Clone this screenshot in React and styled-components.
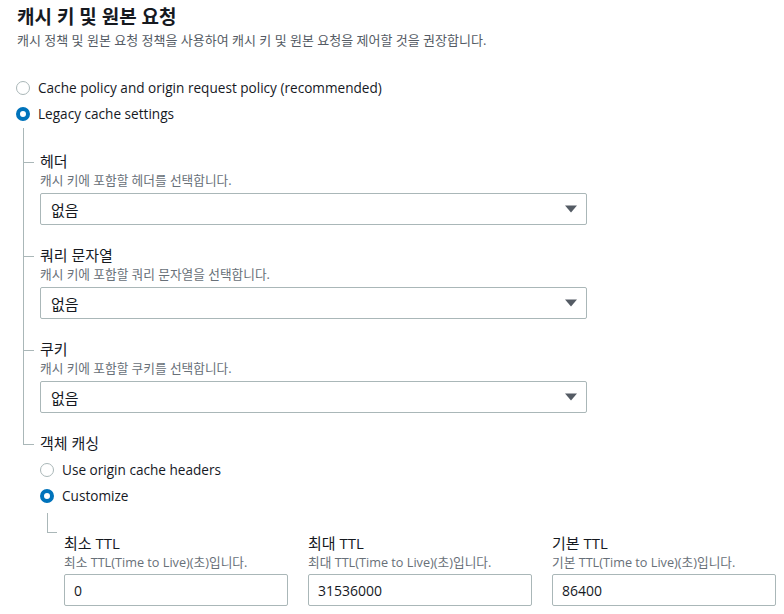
import React from "react";
import styled, { createGlobalStyle } from "styled-components";

const Global = createGlobalStyle`
  html, body { margin: 0; padding: 0; background: #ffffff; }
  body {
    font-family: "Open Sans", "Noto Sans CJK KR", sans-serif;
    color: #16191f;
  }
  * { box-sizing: border-box; }
`;

const Page = styled.div`
  width: 784px;
  height: 614px;
  overflow: hidden;
  padding: 5px 0 0 16px;
`;

const Title = styled.h2`
  margin: 0;
  font-size: 19px;
  font-weight: 700;
  line-height: 24px;
  padding-left: 1px;
`;

const Subtitle = styled.p`
  margin: 3px 0 0;
  font-size: 13px;
  line-height: 16px;
  color: #545b64;
  padding-left: 1px;
`;

const RadioList = styled.div`
  display: flex;
  flex-direction: column;
  gap: 6px;
  margin-top: ${(p) => p.$top}px;
`;

const RadioRow = styled.label`
  display: flex;
  align-items: center;
  gap: 8px;
  height: 20px;
  font-size: 13.6px;
  line-height: 20px;
  color: #16191f;
`;

const RadioDot = styled.span`
  width: 14px;
  height: 14px;
  border-radius: 50%;
  flex: none;
  background: #ffffff;
  border: ${(p) => (p.$checked ? "4px solid #0073bb" : "1px solid #aab7b8")};
`;

const Tree = styled.div`
  display: flex;
  flex-direction: column;
  gap: 20px;
  margin: 0 0 0 7px;
  padding-top: 27px;
`;

const TreeItem = styled.div`
  position: relative;
  padding-left: 17px;

  &::before {
    content: "";
    position: absolute;
    left: 0;
    top: -20px;
    width: 10px;
    height: 31px;
    border-left: 1px solid #aab7b8;
    border-bottom: 1px solid #aab7b8;
  }
  &:first-child::before {
    top: -23px;
    height: 34px;
  }
  &::after {
    content: "";
    position: absolute;
    left: 0;
    top: 10px;
    bottom: 0;
    border-left: 1px solid #aab7b8;
    display: ${(p) => (p.$last ? "none" : "block")};
  }
`;

const Label = styled.div`
  font-size: 15px;
  line-height: 20px;
  color: #16191f;
`;

const Desc = styled.div`
  margin-top: 1px;
  font-size: 12.7px;
  line-height: 16px;
  color: #687078;
`;

const Select = styled.div`
  margin-top: 5px;
  width: 547px;
  height: 32px;
  border: 1px solid #aab7b8;
  border-radius: 2px;
  display: flex;
  align-items: center;
  justify-content: space-between;
  padding: 0 9px 0 10px;
  font-size: 15px;
  color: #16191f;
`;

const Connector = styled.div`
  width: 10px;
  height: 20px;
  margin: 7px 0 0 7px;
  border-left: 1px solid #aab7b8;
  border-bottom: 1px solid #aab7b8;
`;

const Fields = styled.div`
  display: grid;
  grid-template-columns: repeat(3, 224px);
  column-gap: 20px;
  margin-left: 24px;
`;

const Field = styled.div`
  display: flex;
  flex-direction: column;
`;

const Input = styled.div`
  margin-top: 4px;
  height: 32px;
  border: 1px solid #aab7b8;
  border-radius: 2px;
  display: flex;
  align-items: center;
  padding: 0 9px;
  font-size: 14px;
  color: #16191f;
`;

const Caret = () => (
  <svg width="12" height="8" viewBox="0 0 12 8" aria-hidden="true">
    <path d="M0 0.5 L12 0.5 L6 7.5 Z" fill="#545b64" />
  </svg>
);

const Radio = ({ checked, children }) => (
  <RadioRow>
    <RadioDot $checked={checked} />
    {children}
  </RadioRow>
);

const selects = [
  { label: "헤더", desc: "캐시 키에 포함할 헤더를 선택합니다." },
  { label: "쿼리 문자열", desc: "캐시 키에 포함할 쿼리 문자열을 선택합니다." },
  { label: "쿠키", desc: "캐시 키에 포함할 쿠키를 선택합니다." },
];

const ttls = [
  { label: "최소 TTL", desc: "최소 TTL(Time to Live)(초)입니다.", value: "0" },
  { label: "최대 TTL", desc: "최대 TTL(Time to Live)(초)입니다.", value: "31536000" },
  { label: "기본 TTL", desc: "기본 TTL(Time to Live)(초)입니다.", value: "86400" },
];

export default function App() {
  return (
    <>
      <Global />
      <Page>
        <Title>캐시 키 및 원본 요청</Title>
        <Subtitle>캐시 정책 및 원본 요청 정책을 사용하여 캐시 키 및 원본 요청을 제어할 것을 권장합니다.</Subtitle>
        <RadioList $top={30}>
          <Radio>Cache policy and origin request policy (recommended)</Radio>
          <Radio checked>Legacy cache settings</Radio>
        </RadioList>
        <Tree>
          {selects.map((s) => (
            <TreeItem key={s.label}>
              <Label>{s.label}</Label>
              <Desc>{s.desc}</Desc>
              <Select>
                <span>없음</span>
                <Caret />
              </Select>
            </TreeItem>
          ))}
          <TreeItem $last>
            <Label>객체 캐싱</Label>
            <RadioList $top={7}>
              <Radio>Use origin cache headers</Radio>
              <Radio checked>Customize</Radio>
            </RadioList>
            <Connector />
            <Fields>
              {ttls.map((t) => (
                <Field key={t.label}>
                  <Label>{t.label}</Label>
                  <Desc>{t.desc}</Desc>
                  <Input>{t.value}</Input>
                </Field>
              ))}
            </Fields>
          </TreeItem>
        </Tree>
      </Page>
    </>
  );
}
